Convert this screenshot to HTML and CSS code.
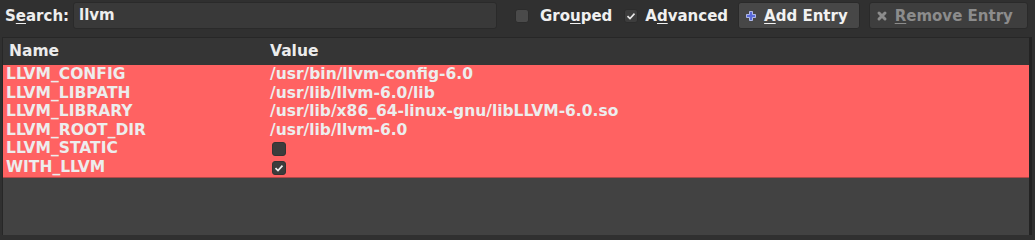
FILE: index.html
```html
<!DOCTYPE html>
<html>
<head>
<meta charset="utf-8">
<link rel="stylesheet" href="styles.css">
</head>
<body>
<div class="toolbar">
  <label class="lbl">S<u>e</u>arch:</label>
  <div class="search">llvm</div>
  <div class="check"><span class="box"></span><span class="ctext">Gro<u>u</u>ped</span></div>
  <div class="check adv"><span class="box on"><svg viewBox="0 0 12 12" width="12" height="12"><path d="M2.5 6.2 L5 8.6 L9.5 3.6" fill="none" stroke="#e8e8e8" stroke-width="1.6"/></svg></span><span class="ctext">A<u>d</u>vanced</span></div>
  <div class="btn"><svg class="ico" viewBox="0 0 12 12" width="12" height="12"><path d="M4.5 1.5h3v3h3v3h-3v3h-3v-3h-3v-3h3z" fill="#5a6ad8" stroke="#c8d0ff" stroke-width="0.8"/></svg><span><u>A</u>dd Entry</span></div>
  <div class="btn dis"><svg class="ico" viewBox="0 0 12 12" width="12" height="12"><path d="M3 3 L9 9 M9 3 L3 9" stroke="#8c8c8c" stroke-width="3" stroke-linecap="round"/></svg><span><u>R</u>emove Entry</span></div>
</div>
<div class="table">
  <div class="head"><div class="c1">Name</div><div class="c2">Value</div></div>
  <div class="row"><div class="c1">LLVM_CONFIG</div><div class="c2">/usr/bin/llvm-config-6.0</div></div>
  <div class="row"><div class="c1">LLVM_LIBPATH</div><div class="c2">/usr/lib/llvm-6.0/lib</div></div>
  <div class="row"><div class="c1">LLVM_LIBRARY</div><div class="c2">/usr/lib/x86_64-linux-gnu/libLLVM-6.0.so</div></div>
  <div class="row"><div class="c1">LLVM_ROOT_DIR</div><div class="c2">/usr/lib/llvm-6.0</div></div>
  <div class="row"><div class="c1">LLVM_STATIC</div><div class="c2"><span class="tbox"></span></div></div>
  <div class="row last"><div class="c1">WITH_LLVM</div><div class="c2"><span class="tbox"><svg viewBox="0 0 12 12" width="12" height="12"><path d="M2.5 6.2 L5 8.6 L9.5 3.6" fill="none" stroke="#f0f0f0" stroke-width="1.7"/></svg></span></div></div>
</div>
</body>
</html>
```
FILE: styles.css
```css
html, body {
  margin: 0;
  padding: 0;
  background: #303030;
  font-family: "DejaVu Sans", sans-serif;
  font-weight: bold;
  font-size: 15px;
  color: #eeeeee;
  height: 235px;
  overflow: hidden;
  white-space: nowrap;
}
u { text-decoration-thickness: 1px; text-underline-offset: 2px; }
.toolbar {
  display: flex;
  align-items: center;
  height: 31px;
  padding: 0 5px 0 5px;
}
.toolbar > * { flex: none; }
.lbl { width: 68px; }
.search {
  width: 417px;
  height: 25px;
  line-height: 25px;
  background: #393939;
  border: 1px solid #2a2a2a;
  border-radius: 3px;
  padding-left: 5px;
  margin-right: 18px;
}
.check {
  display: flex;
  align-items: center;
  margin-right: 12px;
}
.check.adv { margin-right: 10px; }
.box {
  width: 12px;
  height: 12px;
  border: 1px solid #2c2c2c;
  background: #4a4a4a;
  border-radius: 3px;
  margin-right: 11px;
  display: flex;
  align-items: center;
  justify-content: center;
}
.box.on { background: #3d3d3d; margin-right: 7px; }
.ctext { color: #f0f0f0; }
.btn {
  display: flex;
  align-items: center;
  height: 25px;
  padding: 0 11px 0 6px;
  background: #474747;
  border: 1px solid #2a2a2a;
  border-radius: 3px;
  margin-right: 9px;
  color: #f2f2f2;
}
.btn .ico { margin-right: 7px; }
.btn.dis {
  background: #3e3e3e;
  color: #8c8c8c;
  margin-right: 0;
  padding-right: 14px;
}
.table {
  margin: 6px 3px 0 2px;
  border: 1px solid #272727;
  border-right: 3px solid #232323;
  background: #424242;
  height: 200px;
  font-size: 15.5px;
}
.head {
  display: flex;
  background: #353535;
  height: 27px;
  line-height: 27px;
  color: #ececec;
}
.head .c1 { padding-left: 6px; }
.c1 { width: 264px; flex: none; padding-left: 3px; }
.head .c1 { width: 261px; }
.c2 { flex: 1; }
.row {
  display: flex;
  background: #ff6262;
  color: #ededed;
  height: 18.6px;
  line-height: 18px;
}
.row.last { border-bottom: 1px solid #b24848; }
.tbox {
  display: inline-flex;
  align-items: center;
  justify-content: center;
  width: 12px;
  height: 12px;
  margin-left: 2px;
  margin-top: 3px;
  vertical-align: top;
  background: #3c3c3c;
  border: 1px solid #333;
  border-radius: 3px;
}
```
